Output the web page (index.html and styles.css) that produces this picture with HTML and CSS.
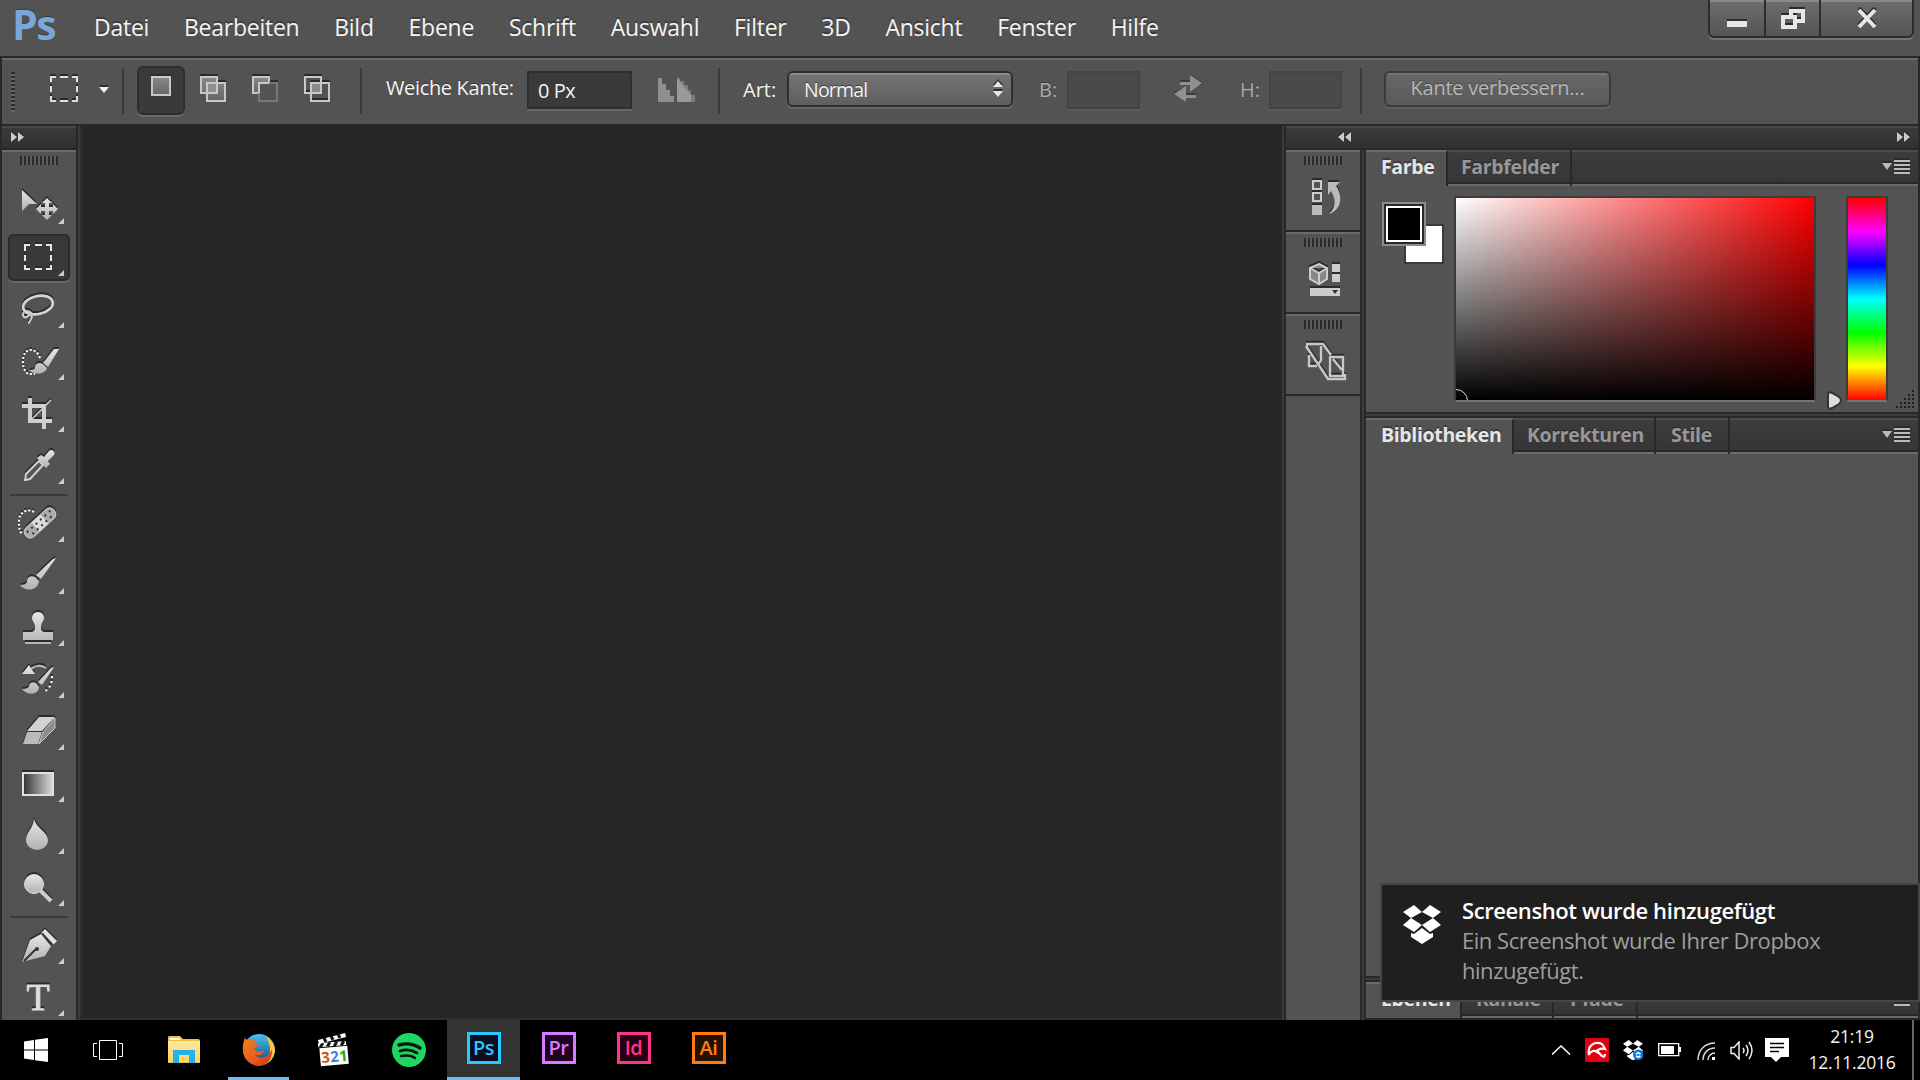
FILE: index.html
```
<!DOCTYPE html>
<html lang="de">
<head>
    <meta charset="UTF-8">
    <title>Photoshop</title>
    <link rel="stylesheet" href="styles.css">
</head>
<body>
    <!-- shared gradients and shapes -->
    <svg class="defs" width="0" height="0">
        <defs>
            <linearGradient id="metal" x1="0" y1="0" x2="0" y2="1">
                <stop offset="0" stop-color="#e6e6e6"/>
                <stop offset="1" stop-color="#b2b2b2"/>
            </linearGradient>
            <linearGradient id="fill" x1="0" y1="0" x2="0" y2="1">
                <stop offset="0" stop-color="#8a8a8a"/>
                <stop offset="1" stop-color="#666"/>
            </linearGradient>
            <linearGradient id="ramp">
                <stop offset="0" stop-color="#333"/>
                <stop offset="1" stop-color="#ddd"/>
            </linearGradient>
            <linearGradient id="fox" x1="0" y1="0" x2="1" y2="1">
                <stop offset="0" stop-color="#f58220"/>
                <stop offset=".6" stop-color="#e8591c"/>
                <stop offset="1" stop-color="#c8321c"/>
            </linearGradient>
            <linearGradient id="globe" x1="0" y1="0" x2="0" y2="1">
                <stop offset="0" stop-color="#4cc0ee"/>
                <stop offset="1" stop-color="#10407e"/>
            </linearGradient>
            <linearGradient id="folder" x1="0" y1="0" x2="0" y2="1">
                <stop offset="0" stop-color="#ffe9a2"/>
                <stop offset="1" stop-color="#fbd35e"/>
            </linearGradient>
            <path id="dropbox" d="M11 0 0 7l8 6 11-6zM27 0l11 7-8 6-11-6zM8 13 0 20l11 7 8-7zM30 13l8 7-11 7-8-7zM8 28l3 1 8-6 8 6 3-1v4l-11 7-11-7z"/>
        </defs>
    </svg>

    <header class="menubar">
        <div class="logo">Ps</div>
        <nav class="menu">
            <span>Datei</span>
            <span>Bearbeiten</span>
            <span>Bild</span>
            <span>Ebene</span>
            <span>Schrift</span>
            <span>Auswahl</span>
            <span>Filter</span>
            <span>3D</span>
            <span>Ansicht</span>
            <span>Fenster</span>
            <span>Hilfe</span>
        </nav>
        <div class="window-buttons">
            <div class="win min"><svg width="20" height="8"><path fill="#e6e6e6" d="M0 2h20v6H0z"/><path fill="#2e2e2e" d="M0 0h20v2H0z"/></svg></div>
            <div class="win restore"><svg class="cut" width="24" height="20"><path fill="none" stroke="#e6e6e6" stroke-width="4" d="M10 10V2h12v10h-6M2 8h12v10H2z"/></svg></div>
            <div class="win close"><svg class="cut" width="20" height="17"><path fill="none" stroke="#e6e6e6" stroke-width="4" d="M2 0l16 17M18 0 2 17"/></svg></div>
        </div>
    </header>

    <div class="options">
        <div class="grip-v"></div>
        <svg class="cut marquee" width="28" height="26" viewBox="0 0 28 26"><path fill="none" stroke="#e0e0e0" stroke-width="2" d="M1 6V1h5M10 1h8M22 1h5v5M27 10v6M27 20v5h-5M18 25h-8M6 25H1v-5M1 16v-6"/></svg>
        <svg class="cut drop" width="10" height="6"><path fill="#f0f0f0" d="M0 0h10L5 6z"/></svg>
        <div class="sep"></div>
        <div class="mode active"><svg class="cut" width="20" height="20"><path fill="url(#fill)" stroke="#c8c8c8" stroke-width="2" d="M1 1h18v18H1z"/></svg></div>
        <div class="mode"><svg class="cut" width="26" height="26"><path fill="url(#fill)" stroke="#c8c8c8" stroke-width="2" d="M1 1h16v16H1zM7 7h18v18H7z"/><path fill="#909090" d="M8 8h8v8H8z"/></svg></div>
        <div class="mode"><svg class="cut" width="26" height="26"><path fill="url(#fill)" stroke="#c8c8c8" stroke-width="2" d="M1 1h16v16H1z"/><path fill="#535353" stroke="#777" stroke-width="2" d="M7 7h18v18H7z"/><path fill="none" stroke="#c8c8c8" stroke-width="2" d="M7 17V7h10"/></svg></div>
        <div class="mode"><svg class="cut" width="26" height="26"><path fill="#8a8a8a" d="M7 7h10v10H7z"/><path fill="none" stroke="#c8c8c8" stroke-width="2" d="M1 1h16v16H1zM7 7h18v18H7z"/></svg></div>
        <div class="sep sep2"></div>
        <span class="label feather">Weiche Kante:</span>
        <div class="field">0 Px</div>
        <svg class="stairs" width="37" height="24"><path fill="#8e8e8e" d="M0 0h4v6h4v6h4v6h4v6H0z"/><path fill="#7c7c7c" d="M19 0h3v3h4v4h4v5h3v5h4v7H19z"/><path fill="#999" d="M19 0l14 17v7H19z"/></svg>
        <div class="sep sep3"></div>
        <span class="label art">Art:</span>
        <div class="select"><span>Normal</span><svg class="cut" width="10" height="16"><path fill="#e6e6e6" d="M0 6 5 0l5 6zM0 10h10l-5 6z"/></svg></div>
        <span class="label dim b">B:</span>
        <div class="field off"></div>
        <svg class="swap" width="28" height="28"><path fill="#3c3c3c" d="M6 6h10V0l12 8v3H6zM22 19H12v-6L0 18v3h22z"/><path fill="#909090" d="M6 8h10V1l12 8-12 9v-7H6zM22 24H12v4L0 20l12-8v9h10z"/></svg>
        <span class="label dim h">H:</span>
        <div class="field off"></div>
        <div class="sep sep4"></div>
        <div class="refine">Kante verbessern...</div>
    </div>

    <main class="workspace">
        <aside class="tools">
            <div class="dock-head"><svg class="cut" width="13" height="10"><path fill="#ccc" d="M0 0l6 5-6 5zM7 0l6 5-6 5z"/></svg></div>
            <div class="tool-list">
                <div class="grip-h"></div>
                <div class="tool"><svg viewBox="2 0 74 52"><path fill="url(#metal)" d="M22 10l15 14h-8l-7 7z"/><path fill="url(#metal)" d="M47 18l5 5h-3v4h4v-3l5 5-5 5v-3h-4v4h3l-5 5-5-5h3v-4h-4v3l-5-5 5-5v3h4v-4h-3z"/></svg></div>
                <div class="tool selected"><svg viewBox="2 0 74 52"><path fill="none" stroke="#e6e6e6" stroke-width="2" d="M25 19v-6h5M35 13h7M46 13h5v6M51 23v6M51 33v4h-5M42 37h-7M30 37h-5v-4M25 29v-6"/></svg></div>
                <div class="tool"><svg viewBox="2 0 74 52"><ellipse cx="38" cy="21" rx="15" ry="9" transform="rotate(-12 38 21)" fill="none" stroke="#d6d6d6" stroke-width="2.6"/><path fill="none" stroke="#ccc" stroke-width="2" d="M24 28c-3 4 1 7 4 4s5 0 3 3-1 4-3 4M26 27c5 0 7 3 5 6"/></svg></div>
                <div class="tool"><svg viewBox="2 0 74 52"><path fill="none" stroke="#fff" stroke-width="2" stroke-dasharray="2 2" d="M40 22c-2-6-6-8-9-8-5 0-8 4-8 11 0 8 3 13 7 13h5"/><path fill="url(#metal)" d="M59 13h-5L43 27l5 4zM44 29c-5-4-9-1-9 2s-3 3-6 3c5 6 17 4 18-2z"/></svg></div>
                <div class="tool"><svg viewBox="2 0 74 52"><path fill="none" stroke="#d0d0d0" stroke-width="4" d="M30 10v23h22M22 18h22v23"/><path stroke="#ccc" stroke-width="1.6" d="M32 31l19-19"/></svg></div>
                <div class="tool"><svg viewBox="2 0 74 52"><path fill="#555" stroke="#d0d0d0" stroke-width="2" d="M39 21 26 34l-1 6 5-1 13-14z"/><path fill="url(#metal)" d="M37 18l4-3 3 2 5-6c3-3 7 1 5 4l-6 6 2 3-4 4z"/></svg></div>
                <div class="rule"></div>
                <div class="tool"><svg viewBox="2 0 74 52"><path fill="none" stroke="#fff" stroke-width="2" stroke-dasharray="2 2" d="M34 14c-6-4-15 0-15 9 0 6 0 9 3 13"/><g transform="rotate(-43 40 25)"><path fill="#aaa" stroke="#ccc" d="M27 19h26q6 0 6 6t-6 6H27q-6 0-6-6t6-6z"/><path fill="#ddd" d="M34 19h12v12H34z"/><path stroke="#333" stroke-width="2" stroke-dasharray="2 4" d="M24 23h32M27 28h28"/></g></svg></div>
                <div class="tool"><svg viewBox="2 0 74 52"><path fill="url(#metal)" d="M56 8l-3 1-17 16 5 4zM35 27c-5-2-8 1-8 4s-3 4-7 4c5 7 18 6 19-4z"/></svg></div>
                <div class="tool"><svg viewBox="2 0 74 52"><path fill="url(#metal)" d="M38 10c4 0 6 3 6 6s-3 5-3 8 0 5 3 6h9v8H23v-8h9c3-1 3-3 3-6s-3-5-3-8 2-6 6-6zM25 40h26v2H25z"/></svg></div>
                <div class="tool"><svg viewBox="2 0 74 52"><path fill="url(#metal)" d="M29 11l6 9H22zM54 13l-3 1-13 14 4 3zM36 29c-4-2-7 1-7 3s-3 3-7 3c5 7 17 6 17-2z"/><path fill="none" stroke="#bbb" stroke-width="2" d="M31 15c4-4 10-4 15-1"/><path fill="none" stroke="#fff" stroke-width="2" stroke-dasharray="2 3" d="M52 22c0 8-2 12-8 16"/></svg></div>
                <div class="tool"><svg viewBox="2 0 74 52"><path fill="#d2d2d2" d="M39 11h16L42 25H27z"/><path fill="#bababa" d="M27 26h15l-4 12H23z"/><path fill="#8c8c8c" stroke="#c8c8c8" d="M55 12v10L39 38l4-12z"/><path fill="none" stroke="#333" d="M27 25.500h15"/></svg></div>
                <div class="tool"><svg viewBox="2 0 74 52"><path fill="url(#ramp)" stroke="#e0e0e0" stroke-width="2" d="M23 15h30v22H23z"/></svg></div>
                <div class="tool"><svg viewBox="2 0 74 52"><path fill="url(#metal)" d="M34 9c2 9 14 13 14 21a11 10 0 0 1-22 0c0-8 7-11 8-21z"/></svg></div>
                <div class="tool"><svg viewBox="2 0 74 52"><path stroke="#ccc" stroke-width="4" d="M40 28l11 11"/><circle cx="34" cy="22" r="9.500" fill="url(#metal)" stroke="#ddd"/></svg></div>
                <div class="rule"></div>
                <div class="tool"><svg viewBox="2 0 74 52"><path fill="url(#metal)" d="M22 42l8-22 11-6 10 12-6 10z"/><path fill="#e0e0e0" d="M45 9l12 12-4 4-12-12z"/><path stroke="#333" stroke-width="1.500" d="M42 13l11 12"/><path stroke="#333" stroke-width="2" d="M24 41l12-12"/><circle cx="37" cy="29" r="2" fill="#333"/></svg></div>
                <div class="tool last"><svg viewBox="2 0 74 52"><text class="type" x="38" y="38" text-anchor="middle">T</text></svg></div>
            </div>
        </aside>

        <section class="canvas"></section>

        <aside class="dock">
            <div class="dock-head double">
                <svg class="cut" width="13" height="10"><path fill="#ccc" d="M6 0 0 5l6 5zM13 0 7 5l6 5z"/></svg>
                <svg class="cut" width="13" height="10"><path fill="#ccc" d="M0 0l6 5-6 5zM7 0l6 5-6 5z"/></svg>
            </div>
            <div class="dock-body">
                <div class="icon-column">
                    <div class="icon-box"><div class="grip-h"></div>
                        <svg class="cut history" width="30" height="35"><path fill="#555" stroke="#ccc" stroke-width="2" d="M1 1h8v8H1zM1 13h8v8H1z"/><path fill="#bbb" d="M0 25h10v10H0zM16 2h12l-4 4c7 9 6 24-7 28 7-7 7-15 2-23l-3 4z"/></svg></div>
                    <div class="icon-box"><div class="grip-h"></div>
                        <svg class="cut props" width="32" height="34"><path fill="#888" stroke="#ccc" stroke-width="2" d="M10 2l8 4v11l-8 5-9-5V6zM1 6l9 5 8-5M10 11v11"/><path fill="#ccc" d="M23 2h8v8h-8zM23 12h8v8h-8zM1 26h30v8H1z"/><path fill="#333" d="M23 28h6l-3 4z"/></svg></div>
                    <div class="icon-box"><div class="grip-h"></div>
                        <svg class="cut brushes" width="42" height="40"><path fill="none" stroke="#c8c8c8" stroke-width="2.400" d="M4 14v11h8M16 5v14l-3 5M1 5l22 33h17v-5M1 3h17l8 11M25 16h13v19H25zM28 18l9 11M2 8V3"/></svg></div>
                </div>
                <div class="gutter"></div>
                <div class="panels">
                    <section class="panel color-panel">
                        <div class="tabs">
                            <div class="tab current farbe">Farbe</div>
                            <div class="tab farbfelder">Farbfelder</div>
                            <div class="tab-rest"><svg class="cut" width="28" height="16"><path fill="#bbb" d="M0 4h10l-5 7zM12 1h16v2H12zM12 5h16v2H12zM12 9h16v2H12zM12 13h16v2H12z"/></svg></div>
                        </div>
                        <div class="color-body">
                            <div class="swatches"><div class="back"></div><div class="front"></div></div>
                            <div class="spectrum"><div class="picker"></div></div>
                            <svg class="slider" width="16" height="19"><path fill="#ddd" stroke="#333" stroke-width="2" d="M1 4q0-4 4-2l7 4q4 3 0 7l-7 4q-4 2-4-2z"/></svg>
                            <div class="hue"></div>
                            <svg class="resize" width="18" height="20"><path stroke="#1e1e1e" stroke-width="2" stroke-dasharray="2 2" d="M17 0v20M13 4v16M9 8v12M5 12v8M1 16v4"/></svg>
                        </div>
                    </section>
                    <section class="panel library-panel">
                        <div class="tabs">
                            <div class="tab current biblio">Bibliotheken</div>
                            <div class="tab korrekt">Korrekturen</div>
                            <div class="tab stile">Stile</div>
                            <div class="tab-rest"><svg class="cut" width="28" height="16"><path fill="#bbb" d="M0 4h10l-5 7zM12 1h16v2H12zM12 5h16v2H12zM12 9h16v2H12zM12 13h16v2H12z"/></svg></div>
                        </div>
                    </section>
                    <section class="panel layer-panel">
                        <div class="tabs">
                            <div class="tab current ebenen">Ebenen</div>
                            <div class="tab kanaele">Kanäle</div>
                            <div class="tab pfade">Pfade</div>
                            <div class="tab-rest"><svg class="cut" width="28" height="16"><path fill="#bbb" d="M0 4h10l-5 7zM12 1h16v2H12zM12 5h16v2H12zM12 9h16v2H12zM12 13h16v2H12z"/></svg></div>
                        </div>
                    </section>
                </div>
            </div>
        </aside>
    </main>

    <div class="toast">
        <svg width="38" height="39" viewBox="0 0 38 39"><use href="#dropbox" fill="#fff"/></svg>
        <div class="toast-text">
            <h3>Screenshot wurde hinzugefügt</h3>
            <p>Ein Screenshot wurde Ihrer Dropbox</p>
            <p>hinzugefügt.</p>
        </div>
    </div>

    <footer class="taskbar">
        <div class="sys"><svg width="24" height="24"><path fill="#fff" d="M0 3.500 10 2v9.500H0zM11 1.800 24 0v11.500H11zM0 12.500h10V22L0 20.500zM11 12.500h13V24l-13-1.800z"/></svg></div>
        <div class="sys"><svg width="30" height="20"><path fill="none" stroke="#fff" d="M6.500.5h17v19h-17zM4 3.500H.5v13H4M26 3.500h3.500v13H26"/></svg></div>
        <div class="app"><svg width="32" height="28"><path fill="#f5bd3c" d="M0 1q0-1 2-1h10l3 3h15q2 0 2 2v22H0z"/><path fill="url(#folder)" d="M0 5h32v21H0z"/><path fill="#fff" d="M2 2h10v2H2z"/><path fill="#20b2e8" d="M5 14h22v13h-6v-8H11v8H5z"/></svg></div>
        <div class="app running"><svg width="34" height="34"><circle cx="17" cy="17" r="16" fill="url(#globe)"/><path fill="#ffc53a" d="M24 3c6 4 9 9 9 15a16 16 0 0 1-12 14c9-8 9-18 3-29z"/><path fill="url(#fox)" d="M3 4c0 2 1 3 3 3 2-1 4-1 6-1l1 4 4 2c-1 2-5 2-5 4 4 5 10 0 10 2-1 5-6 4-9 4 5 5 14 3 17-6 1 8-4 17-13 17A16.500 16.500 0 0 1 1 18C0 12 2 9 3 4z"/></svg></div>
        <div class="app"><svg class="clapper" width="34" height="34"><g transform="rotate(-5 17 22)"><path fill="#fff" d="M3 14h28v18H3z"/><path fill="#fff" d="M2 9h28v4H2z"/><path stroke="#111" stroke-width="3" d="M7 9l-3 4M14 9l-3 4M21 9l-3 4M28 9l-3 4"/><g class="clap"><text x="4" y="29" fill="#d2541c">3</text><text x="13" y="29" fill="#3b7fd4">2</text><text x="22" y="29" fill="#28a028">1</text></g></g><path fill="#fff" d="M1 7 28 0l1 4L2 11z"/><path stroke="#111" stroke-width="3" d="M7 5l2 4M14 3l2 4M21 1l2 4"/></svg></div>
        <div class="app"><svg width="34" height="34"><circle cx="17" cy="17" r="17" fill="#1ed760"/><path fill="none" stroke="#111" stroke-linecap="round" stroke-width="3.400" d="M7 12c7-2 15-1 21 3"/><path fill="none" stroke="#111" stroke-linecap="round" stroke-width="2.800" d="M8 18c6-2 12-1 17 2"/><path fill="none" stroke="#111" stroke-linecap="round" stroke-width="2.400" d="M9 23c5-1 10-1 14 2"/></svg></div>
        <div class="app open"><div class="adobe ps">Ps</div></div>
        <div class="app"><div class="adobe pr">Pr</div></div>
        <div class="app"><div class="adobe id">Id</div></div>
        <div class="app"><div class="adobe ai">Ai</div></div>
        <div class="tray">
            <svg width="18" height="10"><path fill="none" stroke="#fff" stroke-width="1.500" d="M0 9.500 9 1l9 8.500"/></svg>
            <svg class="avira" width="24" height="24"><rect width="24" height="24" rx="1" fill="#e1000f"/><path fill="none" stroke="#fff" stroke-width="2.200" d="M4 17C2 7 10 3 17 6M4 17c1-4 5-5 8-3 1-3 4-4 8-3-1-2-2-4-3-5M11 12l6 6c2 1 3 1 3-2"/></svg>
            <svg class="dbx" width="20" height="20" viewBox="0 0 38 38"><use href="#dropbox" fill="#fff"/><circle cx="29" cy="28" r="10" fill="#0f7be0"/><path fill="none" stroke="#fff" stroke-width="3" d="M25 27q4-5 8 0M33 30q-4 5-8 0"/></svg>
            <svg class="bat" width="23" height="14"><path fill="none" stroke="#fff" stroke-width="1.300" d="M.7.7h20v12H.700z"/><path fill="#fff" d="M3 3h13v8H3zM21 4h2v5h-2z"/></svg>
            <svg class="wifi" width="18" height="18"><path fill="none" stroke="#ddd" stroke-width="1.500" d="M1 18C1 8 8 1 18 1M6 18C6 11 11 6 18 6M11 18c0-4 3-7 7-7"/><path fill="#fff" d="M15 15h3v3h-3z"/></svg>
            <svg class="vol" width="23" height="19"><path fill="none" stroke="#eee" stroke-width="1.500" d="M1 6.500h3L9 1v17l-5-5.500H1zM13 7q2 2.500 0 5M16 4q4 5.500 0 11M19 1q6 8.500 0 17"/></svg>
            <svg class="msg" width="24" height="24"><path fill="#fff" d="M0 0h24v19h-8l-5 5-5-5H0z"/><path stroke="#000" stroke-width="1.500" d="M5 5.500h14M5 9.500h14M5 13.500h9"/></svg>
            <div class="clock"><span>21:19</span><span>12.11.2016</span></div>
            <div class="peek"></div>
        </div>
    </footer>
</body>
</html>
```

FILE: styles.css
```
*, *::before {
    box-sizing: border-box;
}
body {
    margin: 0;
    width: 1920px;
    height: 1080px;
    overflow: hidden;
    display: flex;
    flex-direction: column;
    background: #282828;
    color: #f4f4f4;
    font-family: "Open Sans", "Noto Sans", sans-serif;
}
svg {
    display: block;
    flex: none;
}
.defs {
    position: absolute;
}
.cut, .tool svg {
    overflow: visible;
    filter: drop-shadow(0 -2px 0 #2b2b2b);
}

/* menu bar */
.menubar {
    height: 56px;
    flex: none;
    display: flex;
    background: #535353;
}
.logo {
    width: 94px;
    padding-left: 12px;
    font: bold 41px/49px "Open Sans", sans-serif;
    letter-spacing: -1.5px;
    color: #7aa7d9;
    text-shadow: 0 -1px #3c3c3c;
}
.menu {
    display: flex;
    gap: 34.8px;
    font-size: 23px;
    line-height: 54px;
    letter-spacing: -0.25px;
    text-shadow: 0 -2px #3c3c3c;
}
.window-buttons {
    display: flex;
    margin: 0 6px 0 auto;
    height: 38px;
    border: 2px solid #2d2d2d;
    border-top: 0;
    border-radius: 0 0 6px 6px;
    box-shadow: 0 2px #747474;
    background: linear-gradient(#8a8a8a 2px, #6c6c6c 2px, #555);
}
.win {
    display: flex;
    justify-content: center;
    padding-top: 10px;
}
.min {
    width: 54px;
    padding-top: 19px;
}
.restore {
    width: 55px;
    padding-top: 9px;
    border-left: 2px solid #2d2d2d;
}
.close {
    width: 93px;
    border-left: 2px solid #2d2d2d;
}

/* options bar */
.options {
    height: 68px;
    flex: none;
    display: flex;
    align-items: flex-start;
    margin: 0 2px;
    padding: 12px 0 0 9px;
    background: #535353;
    border-top: 2px solid #282828;
    box-shadow: inset 0 2px #6a6a6a;
    font-size: 20px;
}
.grip-v {
    width: 4px;
    height: 40px;
    margin: 2px 35px 0 0;
    background: repeating-linear-gradient(#2a2a2a 0 2px, #666 2px 4px);
}
.marquee {
    margin: 6px 21px 0 0;
}
.drop {
    margin: 17px 13px 0 0;
}
.sep {
    width: 2px;
    height: 46px;
    margin: -2px 13px 0 0;
    background: #3a3a3a;
}
.mode {
    width: 48px;
    height: 49px;
    margin: -4px 4px 0 0;
    padding: 10px 0 0 10px;
}
.mode.active {
    margin-right: 5px;
    padding-left: 12px;
    border: 2px solid #2e2e2e;
    border-radius: 6px;
    background: #3a3a3a;
    box-shadow: 0 2px #6a6a6a;
}
.mode.active svg {
    margin-top: -2px;
}
.sep2 {
    margin: -2px 24px 0 14px;
}
.label {
    line-height: 36px;
    text-shadow: 0 -1px #3a3a3a;
    white-space: nowrap;
}
.dim {
    color: #aaa;
}
.feather {
    width: 141px;
    letter-spacing: -0.35px;
}
.field {
    width: 105px;
    height: 38px;
    margin-top: 1px;
    padding-left: 9px;
    border: 2px solid #2f2f2f;
    background: #3a3a3a;
    box-shadow: 0 2px #666;
    line-height: 36px;
    letter-spacing: -0.5px;
}
.field.off {
    width: 73px;
    border-color: #444;
    background: #4a4a4a;
    box-shadow: 0 2px #5c5c5c;
}
.stairs {
    margin: 8px 23px 0 26px;
}
.sep3 {
    margin-right: 23px;
}
.art {
    width: 44px;
    line-height: 39px;
}
.select {
    display: flex;
    justify-content: space-between;
    width: 226px;
    height: 36px;
    margin: 1px 26px 0 0;
    padding: 0 8px 0 15px;
    border: 2px solid #2f2f2f;
    border-radius: 6px;
    background: linear-gradient(#8c8c8c 2px, #737373 2px, #5f5f5f);
    box-shadow: 0 2px #666;
    font-size: 19.5px;
    letter-spacing: -0.8px;
    line-height: 34px;
    text-shadow: 0 -1px #3a3a3a;
}
.select svg {
    margin-top: 8px;
}
.b, .h {
    width: 28px;
    line-height: 39px;
}
.swap {
    margin: 4px 38px 0 34px;
}
.h {
    width: 29px;
}
.sep4 {
    margin: -2px 22px 0 18px;
}
.refine {
    width: 227px;
    height: 36px;
    margin-top: 1px;
    border: 2px solid #3c3c3c;
    border-radius: 6px;
    background: linear-gradient(#757575 2px, #666 2px, #5a5a5a);
    box-shadow: 0 2px #606060;
    color: #b8b8b8;
    line-height: 30px;
    letter-spacing: -0.25px;
    text-align: center;
    text-shadow: 0 -1px #444;
}

/* workspace */
.workspace {
    height: 896px;
    flex: none;
    display: flex;
    padding: 2px 2px 0;
}
.dock-head {
    height: 22px;
    flex: none;
    display: flex;
    padding: 6px 9px 0;
    background: linear-gradient(#484848 2px, #3b3b3b 2px, #303030);
}
.double {
    justify-content: space-between;
    padding: 6px 8px 0 52px;
}
.tools {
    width: 74px;
    display: flex;
    flex-direction: column;
}
.tool-list {
    height: 870px;
    margin-top: 2px;
    overflow: hidden;
    background: #535353;
    border-top: 2px solid #6a6a6a;
}
.grip-h {
    width: 38px;
    height: 9px;
    margin: 4px 18px 15px;
    background: repeating-linear-gradient(90deg, #2a2a2a 0 2px, #5c5c5c 2px 4px);
}
.tool {
    position: relative;
    width: 74px;
    height: 52px;
}
.tool svg {
    position: relative;
    width: 74px;
    height: 52px;
}
.tool::after {
    content: "";
    position: absolute;
    left: 56px;
    top: 38px;
    border-left: 6px solid transparent;
    border-bottom: 6px solid #ccc;
}
.selected::before {
    content: "";
    position: absolute;
    left: 6px;
    top: 2px;
    width: 62px;
    height: 47px;
    border: 2px solid #2c2c2c;
    border-radius: 5px;
    background: #393939;
    box-shadow: 0 2px #666;
}
.rule {
    height: 2px;
    margin: 2px 8px;
    background: #3a3a3a;
}
.type {
    font: 38px "Liberation Serif", serif;
    fill: #ddd;
    stroke: #ddd;
}
.canvas {
    flex: 1;
    margin: 0 2px;
    border: solid #3a3a3a;
    border-width: 0 2px;
    background: #262626;
    box-shadow: inset 2px 0 #2e2e2e, inset 0 -2px #303030;
}

/* right dock */
.dock {
    width: 632px;
    display: flex;
    flex-direction: column;
}
.dock-body {
    flex: 1;
    display: flex;
}
.icon-column {
    width: 74px;
    background: #535353;
    border-top: 2px solid #282828;
}
.icon-box {
    height: 82px;
    border-top: 2px solid #6a6a6a;
    border-bottom: 2px solid #282828;
    padding-top: 4px;
}
.icon-box .grip-h {
    margin-top: 0;
}
.history {
    margin-left: 26px;
}
.props {
    margin: 15px 0 0 23px;
}
.brushes {
    margin: -3px 0 0 19px;
}
.gutter {
    width: 6px;
    border: 2px solid #282828;
    border-bottom: 0;
    background: #3c3c3c;
}
.panels {
    width: 552px;
    display: flex;
    flex-direction: column;
    gap: 2px;
    padding-top: 2px;
    background: #3c3c3c;
}
.panel {
    background: #535353;
    border-bottom: 2px solid #282828;
    box-shadow: 0 -2px #282828;
}
.color-panel {
    height: 264px;
}
.library-panel {
    height: 560px;
    margin-top: 2px;
}
.layer-panel {
    height: 38px;
    margin-top: 2px;
}
.tabs {
    display: flex;
    height: 36px;
    font-size: 19.5px;
    font-weight: bold;
    line-height: 34px;
    letter-spacing: -0.35px;
}
.tab, .tab-rest {
    height: 36px;
    padding-left: 13px;
    border-right: 2px solid #282828;
    background: linear-gradient(#4c4c4c 2px, #3c3c3c 2px, #363636 32px, #282828 32px 34px, #6a6a6a 34px);
    color: #989898;
    text-shadow: 0 -1px #282828;
}
.tab.current {
    padding-left: 15px;
    background: #535353;
    border-top: 2px solid #6a6a6a;
    line-height: 30px;
    color: #e6e6e6;
    text-shadow: 0 -2px #3c3c3c;
}
.tab-rest {
    flex: 1;
    display: flex;
    justify-content: flex-end;
    padding: 9px 8px 0 0;
    border: 0;
}
.farbe { width: 82px; }
.farbfelder { width: 124px; }
.biblio { width: 148px; }
.korrekt { width: 142px; }
.stile { width: 74px; padding-left: 15px; }
.ebenen { width: 96px; }
.kanaele { width: 92px; padding-left: 14px; }
.pfade { width: 84px; padding-left: 16px; }
.color-body {
    display: flex;
    padding: 10px 0 0 16px;
}
.swatches {
    position: relative;
    width: 72px;
}
.front {
    position: absolute;
    left: 0;
    top: 6px;
    width: 44px;
    height: 44px;
    border: 2px solid #8c8c8c;
    background: #000;
    box-shadow: inset 0 0 0 2px #282828, inset 0 0 0 4px #fff;
}
.back {
    position: absolute;
    left: 22px;
    top: 28px;
    width: 40px;
    height: 40px;
    border: 2px solid #3a3a3a;
    background: #fff;
}
.spectrum {
    width: 362px;
    height: 206px;
    overflow: hidden;
    position: relative;
    border: 2px solid #3c3c3c;
    border-bottom-color: #747474;
    background: linear-gradient(transparent, #000), linear-gradient(90deg, #fff, #f00);
}
.picker {
    position: absolute;
    left: -12px;
    bottom: -13px;
    width: 24px;
    height: 24px;
    border: 1.5px solid #ddd;
    border-radius: 50%;
}
.slider {
    margin: 195px 3px 0 11px;
}
.hue {
    width: 42px;
    height: 206px;
    border: 2px solid #3c3c3c;
    border-bottom-color: #747474;
    background: linear-gradient(#f00, #f0f, #00f, #0ff, #0f0, #ff0, #f00);
}
.resize {
    margin: 194px 0 0 8px;
}

/* notification over the panels */
.toast {
    position: absolute;
    left: 1380px;
    top: 883px;
    width: 540px;
    height: 119px;
    display: flex;
    padding: 20px 0 0 21px;
    border: 2px solid #464646;
    background: #1f1f1f;
}
.toast-text {
    margin: -10px 0 0 21px;
    font-size: 22px;
    line-height: 30px;
    color: #9e9e9e;
    white-space: nowrap;
}
.toast h3 {
    margin: 0;
    font-size: 22px;
    font-weight: 600;
    letter-spacing: -0.4px;
    color: #fff;
}
.toast p {
    margin: 0;
    letter-spacing: -0.47px;
}

/* taskbar */
.taskbar {
    height: 60px;
    flex: none;
    display: flex;
    background: #000;
}
.sys {
    width: 72px;
    display: flex;
    align-items: center;
    justify-content: center;
}
.sys + .app {
    margin-left: 3px;
}
.app {
    width: 73px;
    margin: 0 1px;
    display: flex;
    align-items: center;
    justify-content: center;
    padding-bottom: 1px;
}
.running {
    background: linear-gradient(#76b9ed, #76b9ed) 50% 100% / 61px 3px no-repeat;
}
.open {
    background: linear-gradient(#333 57px, #76b9ed 57px);
}
.clapper {
    overflow: visible;
}
.clap {
    font: bold 15px "Open Sans", sans-serif;
}
.adobe {
    width: 34px;
    height: 32px;
    margin-bottom: 3px;
    border: 3px solid;
    font-size: 20px;
    font-weight: 600;
    line-height: 25px;
    text-align: center;
    letter-spacing: -0.5px;
}
.ps { color: #26c9ff; background: #0c0c1e; }
.pr { color: #d67bff; background: #1b0223; }
.id { color: #ff3390; background: #26000f; }
.ai { color: #ff7c14; background: #241000; }
.tray {
    display: flex;
    align-items: center;
    margin-left: auto;
}
.avira { margin-left: 15px; }
.dbx { margin-left: 14px; }
.bat { margin-left: 15px; }
.wifi { margin: 2px 0 0 16px; }
.vol { margin-left: 15px; }
.msg { margin-left: 12px; }
.clock {
    display: flex;
    flex-direction: column;
    width: 122px;
    margin: 0 0 3px 2px;
    font-size: 17.5px;
    line-height: 26px;
    text-align: center;
    letter-spacing: -0.2px;
}
.peek {
    width: 2px;
    height: 60px;
    margin: 0 6px 0 -1px;
    background: #666;
}
```
